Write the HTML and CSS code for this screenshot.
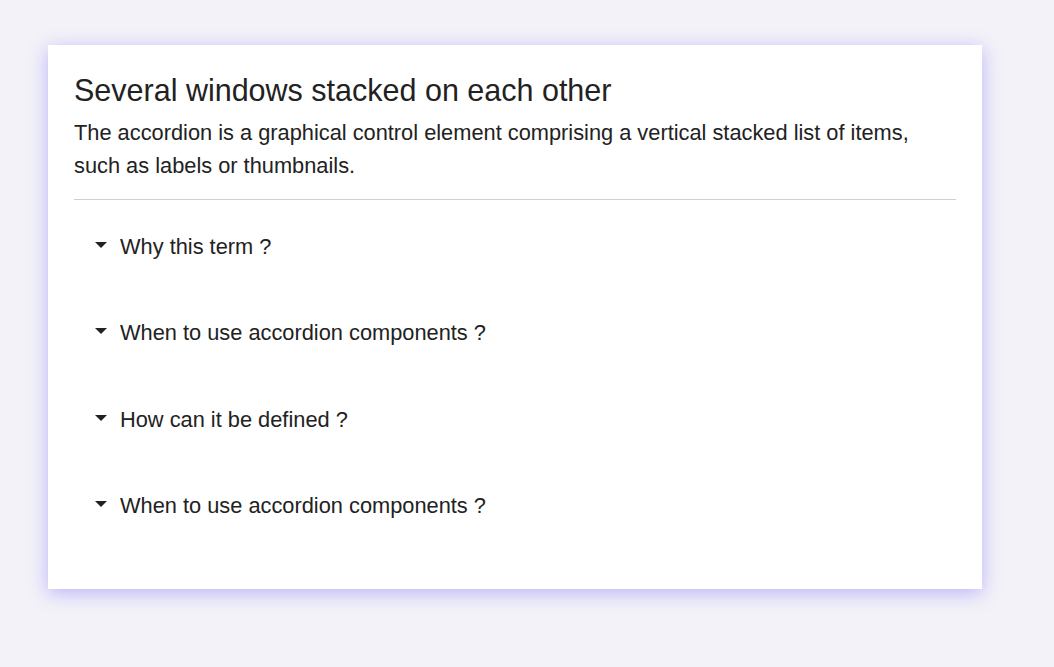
FILE: index.html
```html
<!DOCTYPE html>
<html lang="en">
<head>
<meta charset="utf-8">
<title>Accordion</title>
<link rel="stylesheet" href="styles.css">
</head>
<body>
<main class="card">
  <h1 class="title">Several windows stacked on each other</h1>
  <p class="lead">The accordion is a graphical control element comprising a vertical stacked list of items, such as labels or thumbnails.</p>
  <hr class="divider">
  <ul class="accordion">
    <li class="item"><span class="caret"></span><span class="label">Why this term ?</span></li>
    <li class="item"><span class="caret"></span><span class="label">When to use accordion components ?</span></li>
    <li class="item"><span class="caret"></span><span class="label">How can it be defined ?</span></li>
    <li class="item"><span class="caret"></span><span class="label">When to use accordion components ?</span></li>
  </ul>
</main>
</body>
</html>
```

FILE: styles.css
```css
* { box-sizing: border-box; }
html, body {
  margin: 0;
  padding: 0;
  background: #f3f2f8;
  font-family: "Liberation Sans", Arial, sans-serif;
  color: #222;
}
body {
  padding: 45px 0 0 48px;
  min-height: 667px;
}
.card {
  width: 934px;
  height: 544px;
  background: #fff;
  padding: 29px 26px 0 26px;
  box-shadow: 0 4px 18px rgba(115, 105, 255, 0.45);
}
.title {
  margin: 0;
  font-size: 30.5px;
  font-weight: normal;
  line-height: 32px;
}
.lead {
  margin: 10px 0 0 0;
  font-size: 21.8px;
  line-height: 33px;
}
.divider {
  margin: 17px 0 0 0;
  border: 0;
  border-top: 1px solid #cfcfcf;
  height: 0;
}
.accordion {
  list-style: none;
  margin: 0;
  padding: 3px 0 0 0;
}
.item {
  display: flex;
  align-items: center;
  gap: 13px;
  padding: 31.75px 0 31.75px 21px;
  font-size: 21.8px;
  line-height: 23px;
}
.caret {
  width: 0;
  height: 0;
  border-left: 6.5px solid transparent;
  border-right: 6.5px solid transparent;
  border-top: 6.5px solid #222;
  margin-top: -3px;
}
```
